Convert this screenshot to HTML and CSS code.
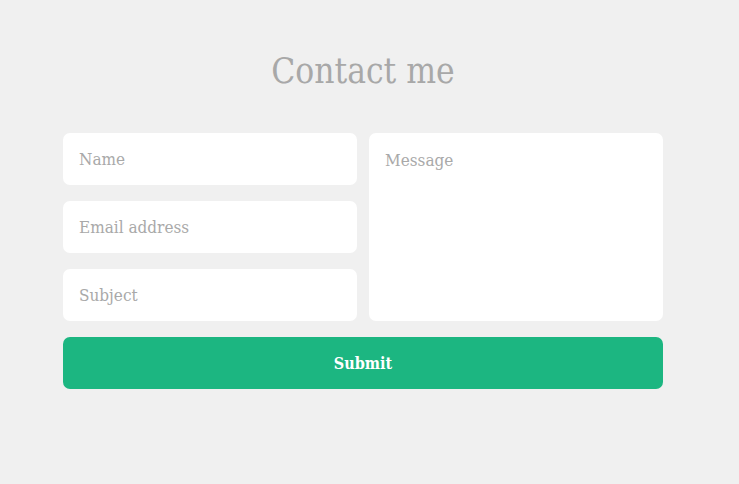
FILE: index.html
```html
<!DOCTYPE html>
<html>
<head>
<meta charset="utf-8">
<link rel="stylesheet" href="styles.css">
</head>
<body>
<div class="page">
  <h1 class="title">Contact me</h1>
  <form class="form">
    <div class="fields">
      <input class="field" type="text" placeholder="Name">
      <input class="field" type="text" placeholder="Email address">
      <input class="field" type="text" placeholder="Subject">
    </div>
    <textarea class="field message" placeholder="Message"></textarea>
    <button class="submit" type="button">Submit</button>
  </form>
</div>
</body>
</html>
```
FILE: styles.css
```css
html, body {
  margin: 0;
  padding: 0;
  background: #f0f0f0;
}
body {
  font-family: "DejaVu Serif Condensed", "DejaVu Serif", serif;
  font-stretch: condensed;
}
.page {
  width: 600px;
  margin-left: 63px;
  padding-top: 48px;
}
.title {
  margin: 0;
  text-align: center;
  font-size: 35px;
  line-height: 46px;
  font-weight: normal;
  color: #a8a8a8;
}
.form {
  margin-top: 39px;
  display: grid;
  grid-template-columns: 294px 294px;
  column-gap: 12px;
  row-gap: 16px;
}
.fields {
  display: flex;
  flex-direction: column;
  gap: 16px;
}
.field {
  box-sizing: border-box;
  height: 52px;
  width: 100%;
  border: none;
  border-radius: 7px;
  background: #fff;
  padding: 0 16px;
  font-family: "DejaVu Serif Condensed", "DejaVu Serif", serif;
  font-stretch: condensed;
  font-size: 17px;
  color: #555;
  outline: none;
  margin: 0;
}
.field::placeholder {
  color: #a9a9a9;
}
.message {
  height: 188px;
  padding: 16px;
  line-height: 22px;
  resize: none;
  display: block;
}
.submit {
  grid-column: 1 / span 2;
  height: 52px;
  border: none;
  border-radius: 7px;
  background: #1cb681;
  color: #fff;
  font-family: "DejaVu Serif Condensed", "DejaVu Serif", serif;
  font-stretch: condensed;
  font-size: 16px;
  font-weight: bold;
  margin: 0;
}
```
